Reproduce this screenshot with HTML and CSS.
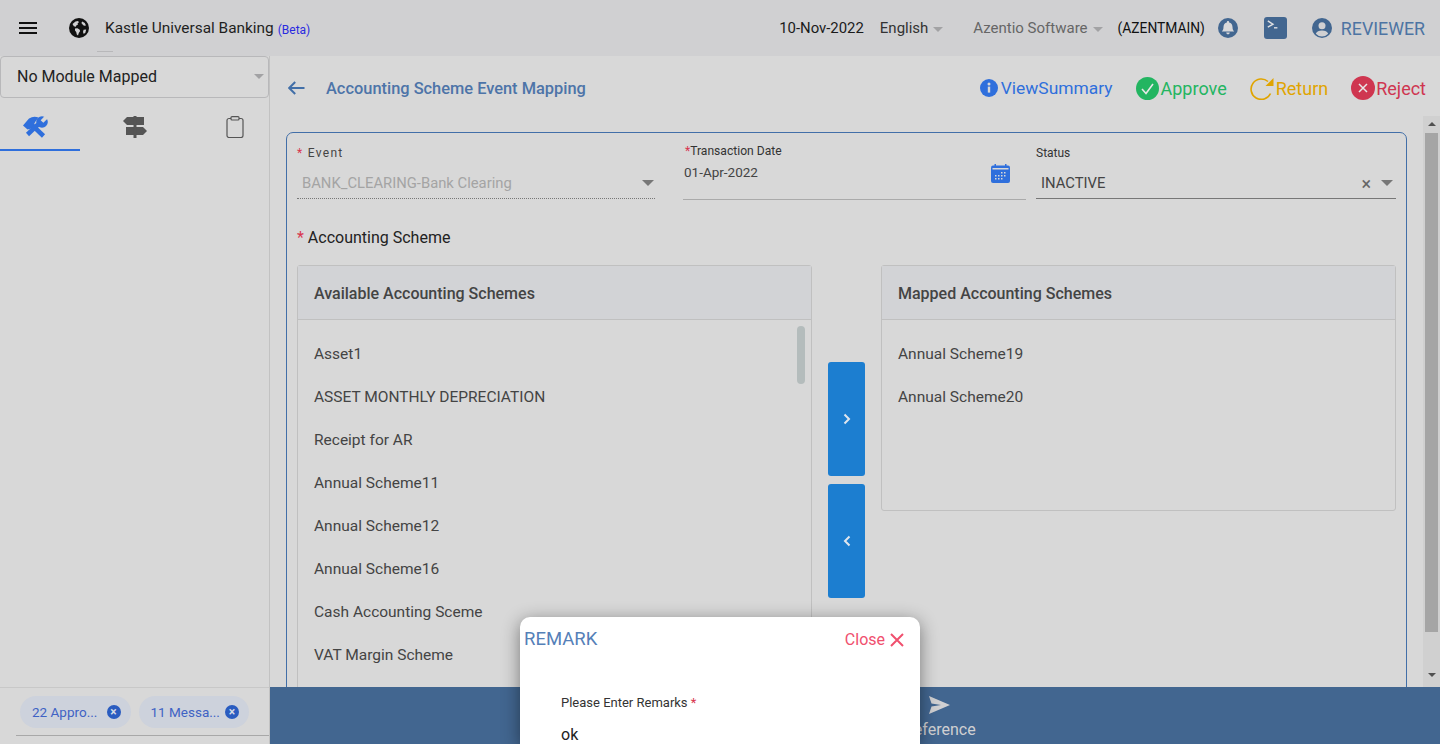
FILE: index.html
```html
<!doctype html>
<html>

<head>
    <meta charset="utf-8" />
    <title>Accounting Scheme Event Mapping</title>
    <link rel="stylesheet" href="styles.css">
</head>

<body>
    <header class="topbar">
        <div class="brand">
            <span class="burger"><i></i><i></i><i></i></span>
            <svg class="globe" viewBox="0 0 20 20" width="20" height="20">
                <circle cx="10" cy="10" r="10" fill="#111" />
                <path d="M3.500 6 6.500 3.500 9 3 10 4.200 8.600 5.200 9 6.500 7.500 7.200 6.800 8.800 4.800 8.200Z" fill="#d0d0d2" />
                <path d="M6 10.500 8.400 10.200 10.500 11.500 11.200 13 9.800 15 9 17.500 7.800 16.600 7.200 14 6 12.500Z" fill="#d0d0d2" />
                <path d="M13.200 3.400 15.800 5 17 7.400 15 7.800 13.600 6.400 12.400 5Z" fill="#d0d0d2" />
                <path d="M14.600 11.800 17.200 11.500 16.400 14.400 14.800 16 14 14Z" fill="#d0d0d2" />
            </svg>
            <span class="brand-name">Kastle Universal Banking</span>
            <span class="beta">(Beta)</span>
            <span class="tick"></span>
        </div>
        <div class="top-info">
            <span class="date">10-Nov-2022</span>
            <span class="lang">English<b class="caret"></b></span>
            <span class="company">Azentio Software<b class="caret"></b></span>
            <span class="code">(AZENTMAIN)</span>
            <svg class="bell" viewBox="0 0 20 20" width="20" height="20">
                <circle cx="10" cy="10" r="10" fill="#426690" />
                <path d="M10 3c.7 0 1.100.4 1.100 1.100v.5c2.200.5 3.400 2.300 3.400 4.500 0 2.700.9 3.500 1.700 4.400H3.800c.8-.9 1.700-1.700 1.700-4.400 0-2.200 1.200-4 3.400-4.500v-.5C8.900 3.400 9.300 3 10 3Z" fill="#d8d8da" />
                <path d="M8.200 14.600h3.600a1.800 1.800 0 0 1-3.600 0Z" fill="#d8d8da" />
            </svg>
            <svg class="term" viewBox="0 0 23 22" width="23" height="22">
                <rect width="23" height="22" rx="3" fill="#426690" />
                <path d="M3.800 3.800 9 7.200 3.800 10.200" fill="none" stroke="#e0e0e2" stroke-width="1.400" />
                <path d="M10 10.800h3.400" stroke="#e0e0e2" stroke-width="1.400" />
            </svg>
            <svg class="user" viewBox="0 0 20 20" width="20" height="20">
                <circle cx="10" cy="10" r="10" fill="#426690" />
                <circle cx="10" cy="7.800" r="3.500" fill="#d0d0d2" />
                <path d="M3.800 15.800c1-2.500 3-3.300 6.200-3.300s5.200.8 6.200 3.300a8.400 8.400 0 0 1-12.400 0Z" fill="#d0d0d2" />
            </svg>
            <span class="role">REVIEWER</span>
        </div>
    </header>

    <div class="app">
        <aside class="sidebar">
            <div class="module-select">No Module Mapped<b class="caret"></b></div>
            <nav class="tabs">
                <a class="tab tab-active">
                    <svg viewBox="0 0 25 22" width="25" height="22">
                        <path d="M9 9 20.500 20" stroke="#2f6fdc" stroke-width="4.500" />
                        <path d="M0 9.500 6 2.500Q10.500-.5 15.500 1.500L12.500 5.500 8.500 12.500 4.500 13.500Z" fill="#2f6fdc" />
                        <path d="M4.500 18.500 15 8.500" stroke="#2f6fdc" stroke-width="4.500" />
                        <circle cx="19" cy="6" r="5.800" fill="#2f6fdc" />
                        <path d="M19 5.500 25-.5" stroke="#d8d8d8" stroke-width="3.800" />
                    </svg>
                </a>
                <a class="tab">
                    <svg viewBox="0 0 24 22" width="24" height="22">
                        <path d="M0 5 4 1H21V9H4Z" fill="#555" />
                        <path d="M3 11H20L24 15 20 19H3Z" fill="#555" />
                        <rect x="10.500" width="3" height="22" fill="#555" />
                    </svg>
                </a>
                <a class="tab tab-last">
                    <svg viewBox="0 0 18 22" width="18" height="22">
                        <rect x="1" y="2.500" width="16" height="19" rx="2" fill="none" stroke="#555" stroke-width="1.200" />
                        <rect x="5" y=".6" width="8" height="3.400" rx="1" fill="#d8d8d8" stroke="#555" stroke-width="1.200" />
                    </svg>
                </a>
            </nav>
            <div class="side-spacer"></div>
            <div class="side-foot">
                <div class="chips">
                    <span class="chip">22 Appro...<b class="chip-x">×</b></span>
                    <span class="chip">11 Messa...<b class="chip-x">×</b></span>
                </div>
                <div class="foot-rule"></div>
            </div>
        </aside>

        <main class="content">
            <div class="page-head">
                <div class="page-title">
                    <svg viewBox="0 0 17 14" width="17" height="14">
                        <path d="M16.500 7H1.500M7.200 1 1.200 7l6 6" fill="none" stroke="#426fa8" stroke-width="2" />
                    </svg>
                    <h1>Accounting Scheme Event Mapping</h1>
                </div>
                <div class="actions">
                    <a class="action act-view">
                        <svg viewBox="0 0 18 18" width="18" height="18">
                            <circle cx="9" cy="9" r="9" fill="#2f6fdc" />
                            <rect x="7.800" y="7.600" width="2.400" height="6" fill="#d8d8d8" />
                            <circle cx="9" cy="5" r="1.500" fill="#d8d8d8" />
                        </svg>
                        ViewSummary
                    </a>
                    <a class="action act-approve">
                        <svg viewBox="0 0 23 23" width="23" height="23">
                            <circle cx="11.500" cy="11.500" r="11.500" fill="#23b561" />
                            <path d="M6 12l4 4.500 7-9.500" fill="none" stroke="#e8e8e8" stroke-width="1.600" />
                        </svg>
                        Approve
                    </a>
                    <a class="action act-return">
                        <svg viewBox="0 0 25 23" width="25" height="23">
                            <path d="M20.500 16.500A10.200 10.200 0 1 1 18 4.500" fill="none" stroke="#e0a400" stroke-width="1.600" />
                            <path d="M23.500 1v8h-8Z" fill="#e0a400" />
                        </svg>
                        Return
                    </a>
                    <a class="action act-reject">
                        <svg viewBox="0 0 24 24" width="24" height="24">
                            <circle cx="12" cy="12" r="12" fill="#cf3650" />
                            <path d="M8 8l8 8M16 8l-8 8" stroke="#e8e8e8" stroke-width="1.500" />
                        </svg>
                        Reject
                    </a>
                </div>
            </div>

            <div class="scroll-row">
                <div class="scroll-area">
                    <section class="card">
                        <div class="fields">
                            <div class="field field-event">
                                <label class="label-spaced"><em>*</em> Event</label>
                                <div class="value value-disabled">BANK_CLEARING-Bank Clearing<b class="caret caret-dark"></b></div>
                            </div>
                            <div class="field field-date">
                                <label><em>*</em>Transaction Date</label>
                                <div class="value-date">
                                    01-Apr-2022
                                    <svg viewBox="0 0 19 19" width="19" height="19">
                                        <rect y="1.500" width="19" height="17.500" rx="2" fill="#2f6fdc" />
                                        <rect x="3.500" width="1.500" height="3" fill="#2f6fdc" />
                                        <rect x="14" width="1.500" height="3" fill="#2f6fdc" />
                                        <rect x="1.500" y="4" width="16" height="1.500" fill="#d8d8d8" />
                                        <path d="M10 8h1.500v1.500H10zM13 8h1.500v1.500H13zM4 11h1.500v1.500H4zM7 11h1.500v1.500H7zM10 11h1.500v1.500H10zM13 11h1.500v1.500H13zM4 14h1.500v1.500H4zM7 14h1.500v1.500H7zM10 14h1.500v1.500H10z" fill="#d8d8d8" />
                                    </svg>
                                </div>
                            </div>
                            <div class="field field-status">
                                <label>Status</label>
                                <div class="value value-status">INACTIVE<span class="clear">×</span><b class="caret caret-dark"></b></div>
                            </div>
                        </div>

                        <div class="scheme-label"><em>*</em> Accounting Scheme</div>

                        <div class="picker">
                            <div class="panel panel-left">
                                <div class="panel-head">Available Accounting Schemes</div>
                                <ul class="scheme-list">
                                    <li>Asset1</li>
                                    <li>ASSET MONTHLY DEPRECIATION</li>
                                    <li>Receipt for AR</li>
                                    <li>Annual Scheme11</li>
                                    <li>Annual Scheme12</li>
                                    <li>Annual Scheme16</li>
                                    <li>Cash Accounting Sceme</li>
                                    <li>VAT Margin Scheme</li>
                                </ul>
                                <span class="list-thumb"></span>
                            </div>
                            <div class="movers">
                                <button class="mover">
                                    <svg viewBox="0 0 8 12" width="8" height="12"><path d="M1.500 1.500 6 6l-4.500 4.500" fill="none" stroke="#e0e6ee" stroke-width="2" /></svg>
                                </button>
                                <button class="mover">
                                    <svg viewBox="0 0 8 12" width="8" height="12"><path d="M6.500 1.500 2 6l4.500 4.500" fill="none" stroke="#e0e6ee" stroke-width="2" /></svg>
                                </button>
                            </div>
                            <div class="panel panel-right">
                                <div class="panel-head">Mapped Accounting Schemes</div>
                                <ul class="scheme-list">
                                    <li>Annual Scheme19</li>
                                    <li>Annual Scheme20</li>
                                </ul>
                            </div>
                        </div>
                    </section>
                </div>
                <div class="track">
                    <b class="arrow arrow-up"></b>
                    <span class="thumb"></span>
                    <b class="arrow arrow-down"></b>
                </div>
            </div>

            <div class="bottom-bar">
                <a class="bar-item">
                    <svg viewBox="0 0 21 18" width="21" height="18">
                        <path d="M0 0 21 9 0 18 2.500 10.500 12 9 2.500 7.500Z" fill="#d0d0d2" />
                    </svg>
                    Reference
                </a>
            </div>
        </main>
    </div>

    <div class="modal">
        <div class="modal-head">
            <span class="modal-title">REMARK</span>
            <span class="modal-close">Close
                <svg viewBox="0 0 14 14" width="14" height="14"><path d="M1 1l12 12M13 1 1 13" stroke="#f0506e" stroke-width="2" /></svg>
            </span>
        </div>
        <div class="modal-body">
            <label>Please Enter Remarks <em>*</em></label>
            <div class="remark-value">ok</div>
        </div>
    </div>
</body>

</html>
```

FILE: styles.css
```css
* {
    box-sizing: border-box;
    font-family: Roboto, sans-serif;
}

html,
body {
    margin: 0;
    padding: 0;
    width: 100%;
    height: 100%;
    overflow: hidden;
    background: #d8d8d8;
}

em {
    color: #d9364f;
    font-style: normal;
}

svg {
    display: block;
    flex: none;
}

.caret {
    display: inline-block;
    width: 0;
    height: 0;
    border-left: 5px solid transparent;
    border-right: 5px solid transparent;
    border-top: 5px solid #a2a2a4;
}

.caret-dark {
    border-left-width: 6px;
    border-right-width: 6px;
    border-top: 6px solid #777;
}

.topbar {
    height: 56px;
    display: flex;
    align-items: center;
    justify-content: space-between;
    padding: 0 15px 0 19px;
    background: #d0d0d2;
}

.brand {
    position: relative;
    display: flex;
    align-items: center;
}

.burger {
    width: 18px;
    margin-right: 32px;
}

.burger i {
    display: block;
    height: 2px;
    margin: 3px 0;
    background: #111;
}

.brand-name {
    margin-left: 16px;
    font-size: 15.400px;
    color: #1f1f1f;
}

.beta {
    margin-left: 4px;
    margin-top: 3px;
    font-size: 12px;
    color: #2a2ae0;
}

.tick {
    position: absolute;
    left: 78px;
    top: 33px;
    width: 16px;
    height: 1px;
    background: #b8b8ba;
}

.top-info {
    display: flex;
    align-items: center;
    font-size: 15px;
    color: #2a2a2a;
}

.date {
    font-size: 14.900px;
    color: #1a1a1a;
}

.lang {
    margin-left: 16px;
    color: #333;
}

.company {
    margin-left: 30px;
    color: #666;
}

.top-info .caret {
    margin-left: 5px;
    vertical-align: middle;
}

.code {
    margin-left: 15px;
    font-size: 13.800px;
    color: #111;
}

.bell {
    margin-left: 13px;
}

.term {
    margin-left: 26px;
}

.user {
    margin-left: 25px;
}

.role {
    margin-left: 9px;
    font-size: 17.800px;
    color: #4d74a3;
}

.app {
    display: flex;
    height: 688px;
}

.sidebar {
    width: 270px;
    display: flex;
    flex-direction: column;
    border-right: 1px solid #c2c2c2;
}

.module-select {
    height: 42px;
    display: flex;
    align-items: center;
    justify-content: space-between;
    padding: 0 4px 2px 16px;
    border: 1px solid #b8b8ba;
    border-radius: 4px;
    font-size: 16px;
    color: #222;
}

.tabs {
    display: flex;
    gap: 20px;
    height: 53px;
}

.tab {
    flex: none;
    width: 80px;
    display: flex;
    justify-content: center;
    padding: 18px 10px 0 0;
}

.tab-last {
    width: 70px;
    padding-right: 0;
}

.tab-active {
    border-bottom: 2px solid #2f6fdc;
}

.side-spacer {
    flex: 1;
}

.side-foot {
    height: 57px;
    padding: 8px 0 0 16px;
    border-top: 1px solid #c8c8c8;
}

.chips {
    display: flex;
    gap: 8px;
    padding-left: 4px;
}

.chip {
    width: 110.500px;
    height: 32px;
    display: flex;
    align-items: center;
    justify-content: space-between;
    padding: 0 10px 0 12px;
    border-radius: 16px;
    background: #cdd2dc;
    font-size: 13.500px;
    color: #3f62c4;
}

.chip-x {
    width: 14px;
    height: 14px;
    display: flex;
    align-items: center;
    justify-content: center;
    border-radius: 50%;
    background: #2a5cc0;
    font-size: 12px;
    color: #d5dbe6;
}

.foot-rule {
    height: 1px;
    margin-top: 7px;
    background: #a8a8a8;
}

.content {
    flex: 1;
    min-width: 0;
    display: flex;
    flex-direction: column;
}

.page-head {
    height: 60px;
    display: flex;
    align-items: center;
    justify-content: space-between;
    padding: 4px 14px 0 18px;
}

.page-title {
    display: flex;
    align-items: center;
    gap: 21px;
}

.page-title h1 {
    margin: 0;
    font-size: 16.400px;
    font-weight: 500;
    color: #4d74a8;
}

.actions {
    display: flex;
    align-items: center;
}

.action {
    display: flex;
    align-items: center;
    font-size: 18px;
}

.act-view {
    gap: 3px;
    font-size: 17.400px;
    color: #2f6fdc;
}

.act-approve {
    gap: 2px;
    margin-left: 23px;
    color: #23b561;
}

.act-return {
    gap: 1px;
    margin-left: 23px;
    color: #e0a400;
}

.act-reject {
    gap: 1px;
    margin-left: 23px;
    color: #cf3650;
}

.scroll-row {
    flex: 1;
    min-height: 0;
    display: flex;
}

.scroll-area {
    flex: 1;
    min-width: 0;
    overflow: hidden;
    padding: 16px 16px 0;
}

.card {
    height: 640px;
    padding: 0 10px;
    border: 1px solid #426fa8;
    border-radius: 7px;
}

.fields {
    display: flex;
    height: 67px;
}

.field {
    font-size: 12px;
    color: #333;
}

.field label {
    display: block;
}

.field-event {
    width: 358px;
    padding-top: 13px;
}

.label-spaced {
    letter-spacing: 1.300px;
    color: #444;
}

.value {
    height: 31px;
    display: flex;
    align-items: center;
    justify-content: space-between;
    margin-top: 8px;
    padding: 0 1px 0 5px;
    font-size: 14.800px;
}

.value-disabled {
    border-bottom: 1px dotted #777;
    color: #a4a4a4;
}

.field-date {
    width: 343px;
    margin-left: 28px;
    padding-top: 11px;
    border-bottom: 1px solid #aaa;
}

.field-date label {
    padding-left: 2px;
    font-size: 12.100px;
}

.value-date {
    display: flex;
    align-items: flex-start;
    justify-content: space-between;
    margin-top: 6px;
    padding: 0 16px 0 1px;
    font-size: 13.500px;
    color: #444;
}

.field-status {
    width: 360px;
    margin-left: 10px;
    padding-top: 13px;
}

.value-status {
    padding-right: 3px;
    border-bottom: 1px solid #777;
    color: #444;
}

.clear {
    margin-left: auto;
    margin-right: 10px;
    font-size: 18px;
    color: #666;
}

.scheme-label {
    margin-top: 28px;
    font-size: 16px;
    color: #222;
}

.picker {
    display: flex;
    align-items: flex-start;
    margin-top: 18px;
}

.panel {
    position: relative;
    border: 1px solid #c0c0c0;
    border-radius: 3px;
}

.panel-left {
    width: 515px;
    height: 500px;
}

.panel-right {
    width: 515px;
    height: 246px;
}

.panel-head {
    height: 54px;
    display: flex;
    align-items: center;
    padding: 2px 0 0 16px;
    border-bottom: 1px solid #c0c0c0;
    background: #d2d3d6;
    font-size: 16px;
    font-weight: 500;
    color: #444;
}

.scheme-list {
    margin: 0;
    padding: 13px 0 0 16px;
    list-style: none;
    font-size: 15.500px;
    color: #444;
}

.scheme-list li {
    height: 43px;
    line-height: 43px;
}

.list-thumb {
    position: absolute;
    top: 60px;
    right: 6px;
    width: 8px;
    height: 58px;
    border-radius: 4px;
    background: #b4bcbc;
}

.movers {
    width: 69px;
    display: flex;
    flex-direction: column;
    align-items: center;
    gap: 8px;
    padding-top: 97px;
}

.mover {
    width: 37px;
    height: 114px;
    display: flex;
    align-items: center;
    justify-content: center;
    padding: 0;
    border: 0;
    border-radius: 3px;
    background: #1c7ed0;
}

.track {
    width: 17px;
    display: flex;
    flex-direction: column;
    align-items: center;
    padding-top: 6px;
    background: #d0d0d0;
}

.thumb {
    width: 13px;
    height: 499px;
    margin-top: 7px;
    background: #a5a5a5;
}

.arrow {
    width: 0;
    height: 0;
    border-left: 4px solid transparent;
    border-right: 4px solid transparent;
}

.arrow-up {
    border-bottom: 4px solid #505050;
}

.arrow-down {
    margin-top: 41px;
    border-top: 4px solid #505050;
}

.bottom-bar {
    height: 57px;
    display: flex;
    padding-left: 634px;
    background: #426690;
}

.bar-item {
    display: flex;
    flex-direction: column;
    align-items: center;
    gap: 6px;
    padding-top: 9px;
    font-size: 16px;
    color: #d0d0d2;
}

.bar-item svg {
    margin-right: 0;
}

.modal {
    position: absolute;
    left: 520px;
    top: 617px;
    width: 400px;
    height: 127px;
    overflow: hidden;
    border-radius: 10px 10px 0 0;
    background: #fff;
    box-shadow: 0 4px 18px rgba(0, 0, 0, 0.45);
}

.modal-head {
    display: flex;
    align-items: center;
    justify-content: space-between;
    padding: 11px 16px 0 4px;
}

.modal-title {
    font-size: 18.500px;
    color: #5580b8;
}

.modal-close {
    display: flex;
    align-items: center;
    gap: 5px;
    padding-top: 1px;
    font-size: 16px;
    color: #f0506e;
}

.modal-body {
    padding: 45px 41px 0;
}

.modal-body label {
    display: block;
    font-size: 13px;
    color: #333;
}

.remark-value {
    margin-top: 15px;
    font-size: 16px;
    color: #222;
}
```
